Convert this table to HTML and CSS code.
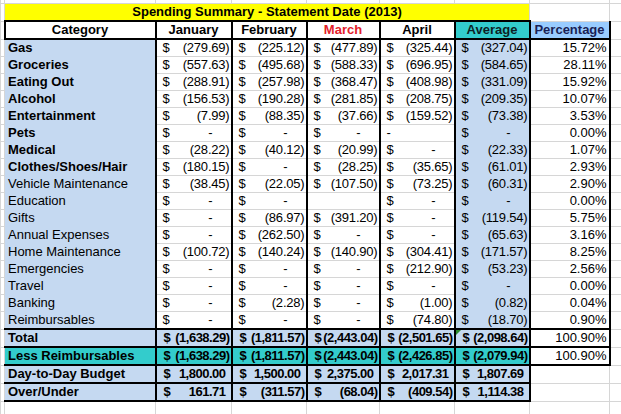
FILE: index.html
```html
<!DOCTYPE html>
<html>
<head>
<meta charset="utf-8">
<title>Spending Summary</title>
<link rel="stylesheet" href="styles.css">
</head>
<body>
<table class="sheet">
  <colgroup>
    <col class="c-edge"><col class="c-cat"><col class="c-jan"><col class="c-feb"><col class="c-mar"><col class="c-apr"><col class="c-avg"><col class="c-pct"><col class="c-extra">
  </colgroup>
  <tr class="r-top"><td></td><td></td><td></td><td></td><td></td><td></td><td></td><td></td><td></td></tr>
  <tr class="r-title"><td></td><td class="title" colspan="6">Spending Summary - Statement Date (2013)</td><td></td><td></td></tr>
  <tr class="r-head">
    <td></td>
    <td class="h">Category</td>
    <td class="h">January</td>
    <td class="h">February</td>
    <td class="h march">March</td>
    <td class="h">April</td>
    <td class="h h-avg">Average</td>
    <td class="h h-pct">Percentage</td>
    <td></td>
  </tr>
  <tr><td></td><td class="cat b">Gas</td><td class="m"><i>$</i>(279.69)</td><td class="m"><i>$</i>(225.12)</td><td class="m"><i>$</i>(477.89)</td><td class="m"><i>$</i>(325.44)</td><td class="m avg"><i>$</i>(327.04)</td><td class="pct">15.72%</td><td></td></tr>
  <tr><td></td><td class="cat b">Groceries</td><td class="m"><i>$</i>(557.63)</td><td class="m"><i>$</i>(495.68)</td><td class="m"><i>$</i>(588.33)</td><td class="m"><i>$</i>(696.95)</td><td class="m avg"><i>$</i>(584.65)</td><td class="pct">28.11%</td><td></td></tr>
  <tr><td></td><td class="cat b">Eating Out</td><td class="m"><i>$</i>(288.91)</td><td class="m"><i>$</i>(257.98)</td><td class="m"><i>$</i>(368.47)</td><td class="m"><i>$</i>(408.98)</td><td class="m avg"><i>$</i>(331.09)</td><td class="pct">15.92%</td><td></td></tr>
  <tr><td></td><td class="cat b">Alcohol</td><td class="m"><i>$</i>(156.53)</td><td class="m"><i>$</i>(190.28)</td><td class="m"><i>$</i>(281.85)</td><td class="m"><i>$</i>(208.75)</td><td class="m avg"><i>$</i>(209.35)</td><td class="pct">10.07%</td><td></td></tr>
  <tr><td></td><td class="cat b">Entertainment</td><td class="m"><i>$</i>(7.99)</td><td class="m"><i>$</i>(88.35)</td><td class="m"><i>$</i>(37.66)</td><td class="m"><i>$</i>(159.52)</td><td class="m avg"><i>$</i>(73.38)</td><td class="pct">3.53%</td><td></td></tr>
  <tr><td></td><td class="cat b">Pets</td><td class="m"><i>$</i><span class="z">-</span></td><td class="m"><i>$</i><span class="z">-</span></td><td class="m"><i>$</i><span class="z">-</span></td><td class="m"><i>-</i></td><td class="m avg"><i>$</i><span class="z">-</span></td><td class="pct">0.00%</td><td></td></tr>
  <tr><td></td><td class="cat b">Medical</td><td class="m"><i>$</i>(28.22)</td><td class="m"><i>$</i>(40.12)</td><td class="m"><i>$</i>(20.99)</td><td class="m"><i>$</i><span class="z">-</span></td><td class="m avg"><i>$</i>(22.33)</td><td class="pct">1.07%</td><td></td></tr>
  <tr><td></td><td class="cat b">Clothes/Shoes/Hair</td><td class="m"><i>$</i>(180.15)</td><td class="m"><i>$</i><span class="z">-</span></td><td class="m"><i>$</i>(28.25)</td><td class="m"><i>$</i>(35.65)</td><td class="m avg"><i>$</i>(61.01)</td><td class="pct">2.93%</td><td></td></tr>
  <tr><td></td><td class="cat">Vehicle Maintenance</td><td class="m"><i>$</i>(38.45)</td><td class="m"><i>$</i>(22.05)</td><td class="m"><i>$</i>(107.50)</td><td class="m"><i>$</i>(73.25)</td><td class="m avg"><i>$</i>(60.31)</td><td class="pct">2.90%</td><td></td></tr>
  <tr><td></td><td class="cat">Education</td><td class="m"><i>$</i><span class="z">-</span></td><td class="m"><i>$</i><span class="z">-</span></td><td class="m"></td><td class="m"><i>$</i><span class="z">-</span></td><td class="m avg"><i>$</i><span class="z">-</span></td><td class="pct">0.00%</td><td></td></tr>
  <tr><td></td><td class="cat">Gifts</td><td class="m"><i>$</i><span class="z">-</span></td><td class="m"><i>$</i>(86.97)</td><td class="m"><i>$</i>(391.20)</td><td class="m"><i>$</i><span class="z">-</span></td><td class="m avg"><i>$</i>(119.54)</td><td class="pct">5.75%</td><td></td></tr>
  <tr><td></td><td class="cat">Annual Expenses</td><td class="m"><i>$</i><span class="z">-</span></td><td class="m"><i>$</i>(262.50)</td><td class="m"><i>$</i><span class="z">-</span></td><td class="m"><i>$</i><span class="z">-</span></td><td class="m avg"><i>$</i>(65.63)</td><td class="pct">3.16%</td><td></td></tr>
  <tr><td></td><td class="cat">Home Maintenance</td><td class="m"><i>$</i>(100.72)</td><td class="m"><i>$</i>(140.24)</td><td class="m"><i>$</i>(140.90)</td><td class="m"><i>$</i>(304.41)</td><td class="m avg"><i>$</i>(171.57)</td><td class="pct">8.25%</td><td></td></tr>
  <tr><td></td><td class="cat">Emergencies</td><td class="m"><i>$</i><span class="z">-</span></td><td class="m"><i>$</i><span class="z">-</span></td><td class="m"><i>$</i><span class="z">-</span></td><td class="m"><i>$</i>(212.90)</td><td class="m avg"><i>$</i>(53.23)</td><td class="pct">2.56%</td><td></td></tr>
  <tr><td></td><td class="cat">Travel</td><td class="m"><i>$</i><span class="z">-</span></td><td class="m"><i>$</i><span class="z">-</span></td><td class="m"><i>$</i><span class="z">-</span></td><td class="m"><i>$</i><span class="z">-</span></td><td class="m avg"><i>$</i><span class="z">-</span></td><td class="pct">0.00%</td><td></td></tr>
  <tr><td></td><td class="cat">Banking</td><td class="m"><i>$</i><span class="z">-</span></td><td class="m"><i>$</i>(2.28)</td><td class="m"><i>$</i><span class="z">-</span></td><td class="m"><i>$</i>(1.00)</td><td class="m avg"><i>$</i>(0.82)</td><td class="pct">0.04%</td><td></td></tr>
  <tr><td></td><td class="cat">Reimbursables</td><td class="m"><i>$</i><span class="z">-</span></td><td class="m"><i>$</i><span class="z">-</span></td><td class="m"><i>$</i><span class="z">-</span></td><td class="m"><i>$</i>(74.80)</td><td class="m avg"><i>$</i>(18.70)</td><td class="pct">0.90%</td><td></td></tr>
  <tr class="sum s-total"><td></td><td class="cat">Total</td><td class="m"><i>$</i>(1,638.29)</td><td class="m"><i>$</i>(1,811.57)</td><td class="m"><i>$</i>(2,443.04)</td><td class="m"><i>$</i>(2,501.65)</td><td class="m avg flag"><i>$</i>(2,098.64)</td><td class="pct boxed">100.90%</td><td></td></tr>
  <tr class="sum s-less"><td></td><td class="cat">Less Reimbursables</td><td class="m"><i>$</i>(1,638.29)</td><td class="m"><i>$</i>(1,811.57)</td><td class="m"><i>$</i>(2,443.04)</td><td class="m"><i>$</i>(2,426.85)</td><td class="m avg"><i>$</i>(2,079.94)</td><td class="pct boxed">100.90%</td><td></td></tr>
  <tr class="sum s-budget"><td></td><td class="cat">Day-to-Day Budget</td><td class="m"><i>$</i><span class="p">1,800.00</span></td><td class="m"><i>$</i><span class="p">1,500.00</span></td><td class="m"><i>$</i><span class="p">2,375.00</span></td><td class="m"><i>$</i><span class="p">2,017.31</span></td><td class="m avg"><i>$</i><span class="p">1,807.69</span></td><td class="pct"></td><td></td></tr>
  <tr class="sum s-over"><td></td><td class="cat">Over/Under</td><td class="m"><i>$</i><span class="p">161.71</span></td><td class="m"><i>$</i>(311.57)</td><td class="m"><i>$</i>(68.04)</td><td class="m"><i>$</i>(409.54)</td><td class="m avg"><i>$</i><span class="p">1,114.38</span></td><td class="pct"></td><td></td></tr>
  <tr class="r-empty"><td></td><td></td><td></td><td></td><td></td><td></td><td></td><td></td><td></td></tr>
</table>
</body>
</html>
```
FILE: styles.css
```css
html, body {
  margin: 0;
  padding: 0;
  background: #ffffff;
  overflow: hidden;
}

.sheet {
  border-collapse: collapse;
  table-layout: fixed;
  width: 650px;
  margin-top: -14px;
  font-family: "Liberation Sans", Arial, sans-serif;
  font-size: 13px;
  color: #000;
}

.c-edge { width: 4px; }
.c-cat { width: 151px; }
.c-jan { width: 76px; }
.c-feb { width: 75px; }
.c-mar { width: 73px; }
.c-apr { width: 75px; }
.c-avg { width: 75px; }
.c-pct { width: 80px; }
.c-extra { width: 41px; }

.sheet td {
  border: 1px solid #d6d6d6;
  height: 16px;
  padding: 0;
  line-height: 16px;
  white-space: nowrap;
  overflow: hidden;
  vertical-align: middle;
}

.sheet .r-empty td { height: 12px; line-height: 12px; }

.title {
  background: #ffff00;
  font-weight: bold;
  text-align: center;
  border-bottom: 2px solid #000 !important;
}

.h {
  font-weight: bold;
  text-align: center;
  background: #fff;
  border-top: 2px solid #000 !important;
  border-bottom: 2px solid #000 !important;
  border-left: 2px solid #000 !important;
  border-right: 2px solid #000 !important;
}
.march { color: #e3202a; }
.h-avg { background: #33cccc; color: #0d1f24; }
.h-pct {
  background: #99ccff;
  color: #1a1f55;
  border-top: 1px solid #d6d6d6 !important;
}

.cat {
  background: #c5d9f1;
  padding-left: 3px !important;
  border-top-color: #c5d9f1 !important;
  border-bottom-color: #c5d9f1 !important;
  border-right: 2px solid #000 !important;
}
.r-head .cat { background: #fff; }
.b { font-weight: bold; }

.m {
  text-align: right;
  padding: 0 1px 0 6px !important;
  border-left: 2px solid #000 !important;
  border-right: 2px solid #000 !important;
  letter-spacing: -0.2px;
}
.m i {
  float: left;
  font-style: normal;
  letter-spacing: 0;
}
.z { padding-right: 17px; }
.p { padding-right: 4px; }

.avg {
  background: #c5d9f1;
  border-top-color: #c5d9f1 !important;
  border-bottom-color: #c5d9f1 !important;
}

.pct {
  text-align: right;
  padding-right: 2px !important;
  border-left: 2px solid #000 !important;
  border-right: 2px solid #000 !important;
}

.sum td.cat,
.sum td.m {
  font-weight: bold;
  background: #c5d9f1;
  border-top: 2px solid #000 !important;
  border-bottom: 2px solid #000 !important;
}
.sum td.cat { border-left: 1px solid #d6d6d6 !important; }
.sum td.m { letter-spacing: -0.5px; padding-left: 7px !important; }
.s-less td.cat,
.s-less td.m { background: #33cccc; }

.sum td.pct.boxed {
  border-top: 2px solid #000 !important;
  border-bottom: 2px solid #000 !important;
}
.s-budget td.pct,
.s-over td.pct {
  border-right: 1px solid #d6d6d6 !important;
}

.flag { position: relative; }
.flag::before {
  content: "";
  position: absolute;
  top: 0;
  left: 0;
  border-top: 5px solid #2b8a2b;
  border-right: 5px solid transparent;
}
```
